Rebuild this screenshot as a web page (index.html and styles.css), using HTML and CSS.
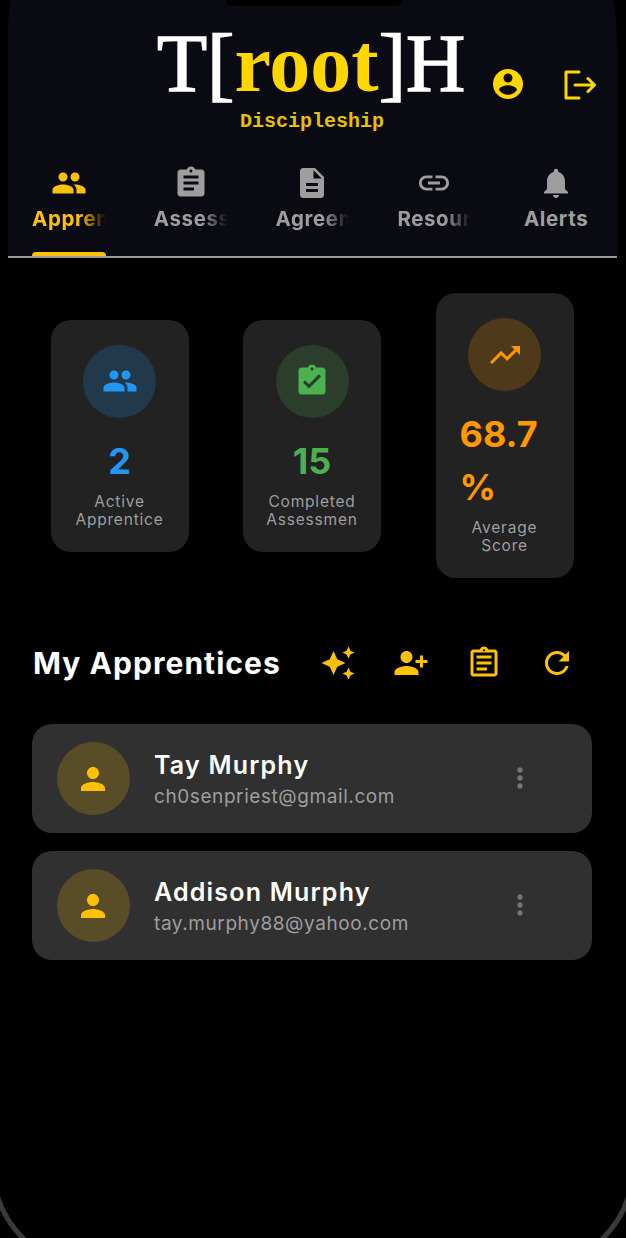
FILE: index.html
```html
<!DOCTYPE html>
<html lang="en">
<head>
<meta charset="utf-8">
<title>T[root]H Discipleship</title>
<link rel="stylesheet" href="styles.css">
</head>
<body>
<div class="screen">
  <header class="app-header">
    <div class="brand">
      <div class="logo-block">
        <div class="logo">T[<span class="logo-root">root</span>]H</div>
        <div class="logo-sub">Discipleship</div>
      </div>
      <div class="brand-actions">
        <svg class="icon-profile" viewBox="2 2 20 20"><path d="M12 2C6.48 2 2 6.48 2 12s4.48 10 10 10 10-4.48 10-10S17.52 2 12 2zm0 3c1.66 0 3 1.34 3 3s-1.34 3-3 3-3-1.34-3-3 1.34-3 3-3zm0 14.2c-2.5 0-4.71-1.28-6-3.22.03-1.99 4-3.08 6-3.08 1.99 0 5.97 1.09 6 3.08-1.29 1.94-3.5 3.22-6 3.22z"/></svg>
        <svg class="icon-logout" viewBox="0 0 32 30"><path d="M15 2H2v26h13M11 15h19M24 8.500l6.500 6.500-6.500 6.500"/></svg>
      </div>
    </div>
    <nav class="tabs">
      <div class="tab tab-active">
        <svg class="tab-icon" viewBox="0 0 24 24"><path d="M16 11c1.660 0 2.990-1.340 2.990-3S17.660 5 16 5c-1.660 0-3 1.340-3 3s1.340 3 3 3zm-8 0c1.660 0 2.990-1.340 2.990-3S9.660 5 8 5C6.340 5 5 6.340 5 8s1.340 3 3 3zm0 2c-2.330 0-7 1.170-7 3.500V19h14v-2.500c0-2.330-4.670-3.500-7-3.500zm8 0c-.29 0-.62.02-.97.05 1.160.84 1.970 1.970 1.970 3.450V19h6v-2.500c0-2.330-4.670-3.500-7-3.500z"/></svg>
        <span class="tab-label tab-fade">Apprentices</span>
      </div>
      <div class="tab">
        <svg class="tab-icon" viewBox="0 0 24 24"><path d="M19 3h-4.180C14.400 1.840 13.300 1 12 1c-1.300 0-2.400.84-2.820 2H5c-1.100 0-2 .9-2 2v14c0 1.100.9 2 2 2h14c1.100 0 2-.9 2-2V5c0-1.100-.9-2-2-2zm-7 0c.55 0 1 .45 1 1s-.45 1-1 1-1-.45-1-1 .45-1 1-1zm2 14H7v-2h7v2zm3-4H7v-2h10v2zm0-4H7V7h10v2z"/></svg>
        <span class="tab-label tab-fade">Assessments</span>
      </div>
      <div class="tab">
        <svg class="tab-icon" viewBox="0 0 24 24"><path d="M14 2H6c-1.100 0-1.990.9-1.990 2L4 20c0 1.100.89 2 1.990 2H18c1.100 0 2-.9 2-2V8l-6-6zm2 16H8v-2h8v2zm0-4H8v-2h8v2zm-3-5V3.500L18.500 9H13z"/></svg>
        <span class="tab-label tab-fade">Agreements</span>
      </div>
      <div class="tab">
        <svg class="tab-icon" viewBox="0 0 24 24"><path d="M3.900 12c0-1.710 1.390-3.100 3.100-3.100h4V7H7c-2.760 0-5 2.240-5 5s2.240 5 5 5h4v-1.900H7c-1.710 0-3.100-1.390-3.100-3.100zM8 13h8v-2H8v2zm9-6h-4v1.900h4c1.710 0 3.100 1.390 3.100 3.100s-1.390 3.100-3.100 3.100h-4V17h4c2.760 0 5-2.240 5-5s-2.240-5-5-5z"/></svg>
        <span class="tab-label tab-fade">Resources</span>
      </div>
      <div class="tab">
        <svg class="tab-icon" viewBox="0 0 24 24"><path d="M12 22c1.100 0 2-.9 2-2h-4c0 1.100.89 2 2 2zm6-6v-5c0-3.070-1.640-5.640-4.500-6.320V4c0-.83-.67-1.500-1.500-1.500s-1.500.67-1.500 1.500v.68C7.630 5.360 6 7.920 6 11v5l-2 2v1h16v-1l-2-2z"/></svg>
        <span class="tab-label">Alerts</span>
      </div>
    </nav>
  </header>

  <main class="content">
    <section class="stats">
      <article class="stat">
        <div class="stat-circle stat-circle-blue">
          <svg class="stat-icon icon-blue" viewBox="0 0 24 24"><path d="M16 11c1.660 0 2.990-1.340 2.990-3S17.660 5 16 5c-1.660 0-3 1.340-3 3s1.340 3 3 3zm-8 0c1.660 0 2.990-1.340 2.990-3S9.660 5 8 5C6.340 5 5 6.340 5 8s1.340 3 3 3zm0 2c-2.330 0-7 1.170-7 3.500V19h14v-2.500c0-2.330-4.670-3.500-7-3.500zm8 0c-.29 0-.62.02-.97.05 1.160.84 1.970 1.970 1.970 3.450V19h6v-2.500c0-2.330-4.670-3.500-7-3.500z"/></svg>
        </div>
        <div class="stat-value value-blue">2</div>
        <div class="stat-label">Active Apprentices</div>
      </article>
      <article class="stat">
        <div class="stat-circle stat-circle-green">
          <svg class="stat-icon icon-green" viewBox="0 0 24 24"><path d="M19 3h-4.180C14.400 1.840 13.300 1 12 1c-1.300 0-2.400.84-2.820 2H5c-1.100 0-2 .9-2 2v14c0 1.100.9 2 2 2h14c1.100 0 2-.9 2-2V5c0-1.100-.9-2-2-2zm-7 0c.55 0 1 .45 1 1s-.45 1-1 1-1-.45-1-1 .45-1 1-1zm-2 14l-4-4 1.410-1.410L10 14.170l6.590-6.590L18 9l-8 8z"/></svg>
        </div>
        <div class="stat-value value-green">15</div>
        <div class="stat-label">Completed Assessments</div>
      </article>
      <article class="stat">
        <div class="stat-circle stat-circle-orange">
          <svg class="stat-icon icon-orange" viewBox="0 0 24 24"><path d="M16 6l2.290 2.290-4.880 4.880-4-4L2 16.590 3.410 18l6-6 4 4 6.300-6.290L22 12V6z"/></svg>
        </div>
        <div class="stat-value stat-value-wrapped value-orange">68.7<br>%</div>
        <div class="stat-label">Average Score</div>
      </article>
    </section>

    <section class="section-head">
      <h1 class="section-title">My Apprentices</h1>
      <div class="section-actions">
        <svg class="action-icon" viewBox="0 0 24 24"><path d="M19 9l1.250-2.750L23 5l-2.750-1.250L19 1l-1.250 2.750L15 5l2.750 1.250L19 9zm-7.500.5L9 4 6.500 9.500 1 12l5.500 2.500L9 20l2.500-5.500L17 12l-5.500-2.500zM19 15l-1.250 2.750L15 19l2.750 1.250L19 23l1.250-2.750L23 19l-2.750-1.250L19 15z"/></svg>
        <svg class="action-icon" viewBox="0 0 24 24"><path d="M9 12c-2.210 0-4-1.790-4-4s1.790-4 4-4 4 1.790 4 4-1.790 4-4 4zm9-2V7h2v3h3v2h-3v3h-2v-3h-3v-2h3zM9 14c2.670 0 8 1.340 8 4v2H1v-2c0-2.660 5.330-4 8-4z"/></svg>
        <svg class="action-icon" viewBox="0 0 24 24"><path d="M7 15h7v2H7zm0-4h10v2H7zm0-4h10v2H7zm12-4h-4.180C14.400 1.840 13.300 1 12 1c-1.300 0-2.400.84-2.820 2H5c-.14 0-.27.01-.4.04-.39.08-.74.28-1.010.55-.18.18-.33.4-.43.64-.1.23-.16.49-.16.77v14c0 .27.06.54.16.78s.25.45.43.64c.27.27.62.47 1.010.55.13.02.26.03.4.03h14c1.100 0 2-.9 2-2V5c0-1.100-.9-2-2-2zm-7-.25c.41 0 .75.34.75.75s-.34.75-.75.75-.75-.34-.75-.75.34-.75.75-.75zM19 19H5V5h14v14z"/></svg>
        <svg class="action-icon" viewBox="0 0 24 24"><path d="M17.650 6.350C16.200 4.900 14.210 4 12 4c-4.420 0-7.990 3.580-7.990 8s3.570 8 7.990 8c3.730 0 6.840-2.550 7.730-6h-2.080c-.82 2.330-3.040 4-5.650 4-3.310 0-6-2.690-6-6s2.690-6 6-6c1.660 0 3.140.69 4.220 1.780L13 11h7V4l-2.350 2.350z"/></svg>
      </div>
    </section>

    <section class="people">
      <article class="person">
        <div class="avatar"><svg class="avatar-icon" viewBox="0 0 24 24"><path d="M12 12c2.210 0 4-1.790 4-4s-1.790-4-4-4-4 1.790-4 4 1.790 4 4 4zm0 2c-2.670 0-8 1.340-8 4v2h16v-2c0-2.660-5.330-4-8-4z"/></svg></div>
        <div class="person-text">
          <div class="person-name">Tay Murphy</div>
          <div class="person-email">ch0senpriest@gmail.com</div>
        </div>
        <svg class="kebab" viewBox="0 0 24 24"><path d="M12 8c1.100 0 2-.9 2-2s-.9-2-2-2-2 .9-2 2 .9 2 2 2zm0 2c-1.100 0-2 .9-2 2s.9 2 2 2 2-.9 2-2-.9-2-2-2zm0 6c-1.100 0-2 .9-2 2s.9 2 2 2 2-.9 2-2-.9-2-2-2z"/></svg>
      </article>
      <article class="person">
        <div class="avatar"><svg class="avatar-icon" viewBox="0 0 24 24"><path d="M12 12c2.210 0 4-1.790 4-4s-1.790-4-4-4-4 1.790-4 4 1.790 4 4 4zm0 2c-2.670 0-8 1.340-8 4v2h16v-2c0-2.660-5.330-4-8-4z"/></svg></div>
        <div class="person-text">
          <div class="person-name">Addison Murphy</div>
          <div class="person-email">tay.murphy88@yahoo.com</div>
        </div>
        <svg class="kebab" viewBox="0 0 24 24"><path d="M12 8c1.100 0 2-.9 2-2s-.9-2-2-2-2 .9-2 2 .9 2 2 2zm0 2c-1.100 0-2 .9-2 2s.9 2 2 2 2-.9 2-2-.9-2-2-2zm0 6c-1.100 0-2 .9-2 2s.9 2 2 2 2-.9 2-2-.9-2-2-2z"/></svg>
      </article>
    </section>
  </main>
</div>
<div class="notch"></div>
<svg class="bezel" viewBox="0 0 626 1238"><path d="M-3 1195Q5 1222 27 1242M629 1195Q621 1222 599 1242"/></svg>
</body>
</html>
```

FILE: styles.css
```css
* { box-sizing: border-box; }

html, body {
  margin: 0;
  height: 1238px;
  overflow: hidden;
  background: #000;
}

body {
  position: relative;
  font-family: "Inter", "Liberation Sans", sans-serif;
}

.screen {
  width: 609px;
  margin-left: 8px;
}

.app-header {
  height: 258px;
  background: #0a0a12;
  border-bottom: 2px solid #9a9aa0;
  border-radius: 3px 5px 0 0 / 40px 50px 0 0;
}

.brand {
  display: flex;
  height: 148px;
  padding-left: 149px;
}

.logo-block {
  width: 310px;
}

.logo {
  height: 98px;
  font-family: "Liberation Serif", serif;
  font-weight: 400;
  font-size: 82px;
  line-height: 128px;
  white-space: nowrap;
  color: #fff;
  -webkit-text-stroke: 1.500px #fff;
}

.logo-root {
  font-weight: 700;
  color: #ffd600;
  -webkit-text-stroke: 0;
}

.logo-sub {
  margin-top: 13px;
  text-align: center;
  font-family: "Liberation Mono", monospace;
  font-weight: 700;
  font-size: 20px;
  line-height: 22px;
  color: #e6c200;
}

.brand-actions {
  display: flex;
  align-items: flex-start;
  margin-left: 26px;
}

.icon-profile {
  width: 30px;
  height: 30px;
  margin-top: 69px;
  fill: #ffd600;
}

.icon-logout {
  width: 32px;
  height: 30px;
  margin: 70px 0 0 41px;
  fill: none;
  stroke: #ffd600;
  stroke-width: 3;
  stroke-linejoin: round;
  stroke-linecap: round;
}

.tabs {
  display: flex;
  height: 108px;
}

.tab {
  position: relative;
  flex: 1 1 0;
  min-width: 0;
  padding: 17px 24px 0;
  display: flex;
  flex-direction: column;
  align-items: center;
  color: #9e9e9e;
  fill: #9e9e9e;
}

.tab-active {
  color: #ffc107;
  fill: #ffc107;
}

.tab-active::after {
  content: "";
  position: absolute;
  left: 24px;
  right: 24px;
  bottom: 0;
  height: 4px;
  border-radius: 4px 4px 0 0;
  background: #ffc107;
}

.tab-icon {
  width: 36px;
  height: 36px;
  flex: none;
}

.tab-label {
  margin-top: 4px;
  max-width: 100%;
  overflow: hidden;
  white-space: nowrap;
  font-weight: 700;
  font-size: 20.500px;
  line-height: 28px;
  letter-spacing: .6px;
}

.tab-fade {
  width: 100%;
  -webkit-mask-image: linear-gradient(to right, #000 65%, transparent 100%);
  mask-image: linear-gradient(to right, #000 65%, transparent 100%);
}

.content {
  padding: 0 25px 0 24px;
}

.stats {
  display: flex;
  align-items: center;
  justify-content: center;
  gap: 54.500px;
  padding-top: 35px;
  padding-bottom: 49px;
}

.stat {
  width: 138px;
  flex: none;
  padding: 25px 23px 23px;
  display: flex;
  flex-direction: column;
  align-items: center;
  border-radius: 20px;
  background: #222;
}

.stat-circle {
  width: 73px;
  height: 73px;
  flex: none;
  display: flex;
  align-items: center;
  justify-content: center;
  border-radius: 50%;
}

.stat-circle-blue { background: rgba(33, 150, 243, .2); }
.stat-circle-green { background: rgba(76, 175, 80, .2); }
.stat-circle-orange { background: rgba(255, 152, 0, .2); }

.stat-icon {
  width: 36px;
  height: 36px;
}

.icon-blue { fill: #2196f3; }
.icon-green { fill: #4caf50; }
.icon-orange { fill: #ff9800; }

.stat-value {
  margin-top: 17px;
  font-weight: 700;
  font-size: 36px;
  line-height: 53px;
}

.stat-value-wrapped {
  width: 100%;
  padding-left: 1px;
}

.value-blue { color: #2196f3; }
.value-green { color: #4caf50; }
.value-orange { color: #ff9800; }

.stat-label {
  width: 100%;
  height: 36px;
  margin-top: 5px;
  overflow: hidden;
  overflow-wrap: anywhere;
  text-align: center;
  font-size: 15.500px;
  line-height: 18px;
  letter-spacing: .8px;
  color: #9e9e9e;
}

.section-head {
  display: flex;
  align-items: center;
  height: 72px;
  padding-left: 1px;
}

.section-title {
  margin: 0;
  flex: none;
  width: 248px;
  white-space: nowrap;
  font-weight: 700;
  font-size: 30px;
  line-height: 44px;
  letter-spacing: 1.050px;
  color: #fff;
}

.section-actions {
  display: flex;
  margin-left: 20.500px;
}

.action-icon {
  width: 36px;
  height: 36px;
  margin: 0 18.500px;
  fill: #ffc107;
}

.people {
  display: flex;
  flex-direction: column;
  gap: 18px;
  margin-top: 25px;
}

.person {
  display: flex;
  align-items: center;
  height: 109px;
  padding: 0 56px 0 24.500px;
  border-radius: 20px;
  background: #303030;
}

.avatar {
  width: 73px;
  height: 73px;
  flex: none;
  display: flex;
  align-items: center;
  justify-content: center;
  border-radius: 50%;
  background: rgba(255, 193, 7, .2);
}

.avatar-icon {
  width: 36px;
  height: 36px;
  fill: #ffc107;
}

.person-text {
  flex: 1;
  min-width: 0;
  margin-left: 24.500px;
  margin-top: 4px;
}

.person-name {
  font-weight: 600;
  font-size: 25px;
  line-height: 32px;
  letter-spacing: 1.200px;
  color: #fff;
}

.person-email {
  font-size: 19px;
  line-height: 32px;
  letter-spacing: .58px;
  color: #9e9e9e;
}

.kebab {
  width: 32px;
  height: 32px;
  flex: none;
  margin-bottom: 2px;
  fill: #757575;
}

.notch {
  position: absolute;
  top: 0;
  left: 226px;
  width: 176px;
  height: 6px;
  border-radius: 0 0 12px 12px;
  background: #000;
}

.bezel {
  position: absolute;
  inset: 0;
  width: 626px;
  height: 1238px;
  fill: none;
  stroke: #3a3a3a;
  stroke-width: 5;
  pointer-events: none;
}
```
